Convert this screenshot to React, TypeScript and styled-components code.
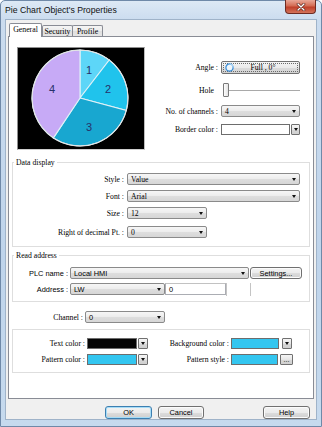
import React from "react";
import styled, { createGlobalStyle } from "styled-components";

const SERIF = `"Liberation Serif", "Times New Roman", serif`;
const SANS = `"Liberation Sans", Arial, sans-serif`;

const GlobalStyle = createGlobalStyle`
  html, body { margin: 0; padding: 0; background: #ffffff; }
  body { width: 322px; height: 427px; overflow: hidden; }
  * { box-sizing: border-box; }
`;

const Window = styled.div`
  width: 322px;
  height: 427px;
  display: flex;
  flex-direction: column;
  padding: 0 4px 6px 4px;
  background: linear-gradient(180deg, #dde9f5 0px, #cbdcef 19px, #bfd4eb 60%, #c6daee 100%);
  border: 1px solid #6f89a8;
  border-radius: 5px 5px 0 0;
`;

const TitleBar = styled.div`
  height: 18px;
  display: flex;
  align-items: flex-start;
  justify-content: space-between;
`;

const Title = styled.span`
  font-family: ${SANS};
  font-size: 8.7px;
  color: #111;
  line-height: 18px;
`;

const CloseButton = styled.div`
  width: 31px;
  height: 14px;
  margin-top: -1px;
  margin-right: 1px;
  display: flex;
  align-items: center;
  justify-content: center;
  border: 1px solid #6e2b22;
  border-top: none;
  border-radius: 0 0 4px 4px;
  background: linear-gradient(180deg, #e9a797 0%, #d46c54 45%, #c0402a 55%, #d3735a 100%);
`;

const Client = styled.div`
  flex: 1;
  display: flex;
  flex-direction: column;
  background: #f0f0f0;
  border: 1px solid #9fb3c9;
  padding: 3px 2px 0 2px;
`;

const TabsRow = styled.div`
  height: 14px;
  display: flex;
  align-items: flex-end;
  padding-left: 1px;
  margin-bottom: -1px;
  position: relative;
  z-index: 1;
`;

const Tab = styled.div<{ $active?: boolean; $w: number; $ml?: number }>`
  width: ${(p) => p.$w}px;
  height: ${(p) => (p.$active ? 14 : 11)}px;
  margin-bottom: ${(p) => (p.$active ? 0 : 1)}px;
  margin-left: ${(p) => p.$ml ?? 0}px;
  display: flex;
  align-items: center;
  justify-content: center;
  border: 1px solid #898c95;
  border-bottom: none;
  border-radius: 2px 2px 0 0;
  background: ${(p) =>
    p.$active ? "#ffffff" : "linear-gradient(180deg, #f5f5f5 0%, #ebebeb 50%, #dedede 51%, #e6e6e6 100%)"};
  font-family: ${SERIF};
  font-size: 7.8px;
  color: #000;
  padding-bottom: ${(p) => (p.$active ? 2 : 0)}px;
`;

const Panel = styled.div`
  height: 363px;
  display: flex;
  flex-direction: column;
  background: #ffffff;
  border: 1px solid #898c95;
`;

const TopSection = styled.div`
  height: 113px;
  display: flex;
`;

const PieBox = styled.div`
  width: 128px;
  height: 103px;
  margin: 10px 0 0 8px;
  background: #000;
  border: 1px solid #8f8f8f;
  border-bottom-color: #cfcfcf;
  border-right-color: #bdbdbd;
  flex-shrink: 0;
`;

const RightCol = styled.div`
  flex: 1;
  display: flex;
  flex-direction: column;
  padding-top: 24px;
`;

const Row = styled.div<{ $mt?: number; $h?: number; $gap?: number }>`
  display: flex;
  align-items: center;
  height: ${(p) => p.$h ?? 12}px;
  margin-top: ${(p) => p.$mt ?? 0}px;
  gap: ${(p) => p.$gap ?? 3}px;
`;

const Label = styled.span<{ $w: number; $pr?: number; $sans?: boolean }>`
  width: ${(p) => p.$w}px;
  flex-shrink: 0;
  text-align: right;
  white-space: nowrap;
  padding-right: ${(p) => p.$pr ?? 0}px;
  font-family: ${(p) => (p.$sans ? SANS : SERIF)};
  font-size: ${(p) => (p.$sans ? 7.4 : 7.7)}px;
  color: #000;
`;

const Combo = styled.div<{ $w: number; $sans?: boolean }>`
  width: ${(p) => p.$w}px;
  height: 12px;
  flex-shrink: 0;
  display: flex;
  align-items: center;
  justify-content: space-between;
  padding: 0 3px 0 3px;
  border: 1px solid #8a8a8a;
  border-radius: 2px;
  background: linear-gradient(180deg, #f6f6f6 0%, #ececec 50%, #dedede 51%, #d6d6d6 100%);
  font-family: ${(p) => (p.$sans ? SANS : SERIF)};
  font-size: ${(p) => (p.$sans ? 7.4 : 7.7)}px;
  color: #000;
`;

const Caret = styled.span`
  width: 0;
  height: 0;
  border-left: 2.5px solid transparent;
  border-right: 2.5px solid transparent;
  border-top: 3px solid #111;
  flex-shrink: 0;
`;

const AngleButton = styled.div`
  width: 79px;
  height: 13px;
  padding: 1px;
  display: flex;
  border: 1px solid #707070;
  border-radius: 2px;
  background: linear-gradient(180deg, #f4f4f4 0%, #ebebeb 50%, #dcdcdc 51%, #d2d2d2 100%);
`;

const FocusRect = styled.div`
  flex: 1;
  display: flex;
  align-items: center;
  border: 1px dotted #6a6a6a;
  font-family: ${SERIF};
  font-size: 7.7px;
  line-height: 7px;
  color: #000;
`;

const AngleText = styled.span`
  flex: 1;
  text-align: center;
  padding-right: 6px;
`;

const SliderBox = styled.div`
  width: 79px;
  height: 14px;
  display: flex;
  align-items: center;
  padding-left: 2px;
`;

const Thumb = styled.div`
  width: 6px;
  height: 14px;
  border: 1px solid #7a7a7a;
  border-radius: 1px;
  background: linear-gradient(90deg, #fdfdfd, #e4e4e4);
  flex-shrink: 0;
`;

const Track = styled.div`
  flex: 1;
  height: 1px;
  background: #a9a9a9;
`;

const Swatch = styled.div<{ $w: number; $color: string; $ml?: number }>`
  width: ${(p) => p.$w}px;
  height: 11px;
  flex-shrink: 0;
  margin-left: ${(p) => p.$ml ?? 0}px;
  border: 1px solid #6d6d6d;
  background: ${(p) => p.$color};
`;

const DropBtn = styled.div<{ $w?: number }>`
  width: ${(p) => p.$w ?? 10}px;
  height: 11px;
  flex-shrink: 0;
  display: flex;
  align-items: center;
  justify-content: center;
  border: 1px solid #707070;
  border-radius: 1px;
  background: linear-gradient(180deg, #f6f6f6 0%, #e6e6e6 50%, #d8d8d8 51%, #d0d0d0 100%);
  font-family: ${SANS};
  font-size: 7px;
  line-height: 7px;
  color: #000;
`;

const PairGap = styled.div<{ $gap: number }>`
  display: flex;
  align-items: center;
  gap: ${(p) => p.$gap}px;
`;

const Group = styled.fieldset<{ $mt: number; $pt: number; $pb: number }>`
  margin: ${(p) => p.$mt}px 3px 0 3px;
  padding: ${(p) => p.$pt}px 0 ${(p) => p.$pb}px 0;
  border: 1px solid #dedede;
  min-width: 0;
`;

const Legend = styled.legend`
  font-family: ${SERIF};
  font-size: 7.7px;
  line-height: 9px;
  padding: 0 2px;
  margin-left: 1px;
  color: #000;
`;

const GroupBody = styled.div`
  display: flex;
  flex-direction: column;
`;

const PushButton = styled.div<{ $w: number; $h?: number; $default?: boolean }>`
  width: ${(p) => p.$w}px;
  height: ${(p) => p.$h ?? 13}px;
  flex-shrink: 0;
  display: flex;
  align-items: center;
  justify-content: center;
  border: 1px solid ${(p) => (p.$default ? "#3c7fb1" : "#707070")};
  border-radius: 3px;
  box-shadow: ${(p) => (p.$default ? "inset 0 0 0 1px #a6dcf7" : "inset 0 0 0 1px #fbfbfb")};
  background: linear-gradient(180deg, #f3f3f3 0%, #ebebeb 50%, #dddddd 51%, #cfcfcf 100%);
  font-family: ${SANS};
  font-size: 7.4px;
  color: #000;
`;

const TextInput = styled.div<{ $w: number }>`
  width: ${(p) => p.$w}px;
  height: 12px;
  flex-shrink: 0;
  display: flex;
  align-items: center;
  padding-left: 3px;
  border: 1px solid #abadb3;
  border-top-color: #c2c2c2;
  background: #fff;
  font-family: ${SANS};
  font-size: 7.4px;
  color: #000;
`;

const Cell = styled.div<{ $w: number }>`
  width: ${(p) => p.$w}px;
  height: 13px;
  flex-shrink: 0;
  border-left: 1px solid #c4c4c4;
`;

const ChannelRow = styled(Row)`
  margin-left: 3px;
`;

const ButtonsRow = styled.div`
  height: 13px;
  margin-top: 7px;
  display: flex;
  align-items: center;
  gap: 6px;
  padding: 0 4px 0 97px;
`;

const Spacer = styled.div`
  flex: 1;
`;

const CYAN = "#33c6f0";

function PieChart() {
  const cx = 62;
  const cy = 50;
  const r = 48;
  const pt = (deg: number) => {
    const a = (deg * Math.PI) / 180;
    return [cx + r * Math.sin(a), cy - r * Math.cos(a)] as const;
  };
  const slices = [
    { from: 0, to: 37.6, color: "#5dd6f8" },
    { from: 37.6, to: 105, color: "#20c3ec" },
    { from: 105, to: 213.7, color: "#18a7d0" },
    { from: 213.7, to: 360, color: "#c7aaf6" },
  ];
  const labels = [
    { t: "1", x: 71, y: 22 },
    { t: "2", x: 90, y: 41 },
    { t: "3", x: 71, y: 79 },
    { t: "4", x: 34, y: 41 },
  ];
  return (
    <svg width="126" height="101" viewBox="0 0 126 101">
      {slices.map((s, i) => {
        const [x1, y1] = pt(s.from);
        const [x2, y2] = pt(s.to);
        const large = s.to - s.from > 180 ? 1 : 0;
        return (
          <path
            key={i}
            d={`M${cx},${cy} L${x1.toFixed(2)},${y1.toFixed(2)} A${r},${r} 0 ${large} 1 ${x2.toFixed(2)},${y2.toFixed(2)} Z`}
            fill={s.color}
            stroke="#dff2f8"
            strokeWidth="1.1"
          />
        );
      })}
      <circle cx={cx} cy={cy} r={r} fill="none" stroke="#e4e4e4" strokeWidth="1" />
      {labels.map((l) => (
        <text
          key={l.t}
          x={l.x}
          y={l.y}
          textAnchor="middle"
          dominantBaseline="central"
          fontFamily={SANS}
          fontSize="11"
          fill="#27306a"
        >
          {l.t}
        </text>
      ))}
    </svg>
  );
}

function CloseIcon() {
  return (
    <svg width="10" height="8" viewBox="0 0 10 8">
      <path d="M2 1 L8 7 M8 1 L2 7" stroke="#5a1d14" strokeWidth="2.6" strokeLinecap="round" />
      <path d="M2 1 L8 7 M8 1 L2 7" stroke="#ffffff" strokeWidth="1.4" strokeLinecap="round" />
    </svg>
  );
}

function AngleIcon() {
  return (
    <svg width="11" height="9" viewBox="0 0 11 9">
      <circle cx="5.5" cy="4.5" r="3.6" fill="#eef6fc" stroke="#3b8ed8" strokeWidth="1.3" />
      <path d="M5.5 0.9 A3.6 3.6 0 0 1 9.1 4.5" stroke="#a9d3f4" strokeWidth="1.3" fill="none" />
    </svg>
  );
}

function ComboBox({ w, value, sans }: { w: number; value: string; sans?: boolean }) {
  return (
    <Combo $w={w} $sans={sans}>
      <span>{value}</span>
      <Caret />
    </Combo>
  );
}

export default function App() {
  return (
    <>
      <GlobalStyle />
      <Window>
        <TitleBar>
          <Title>Pie Chart Object's Properties</Title>
          <CloseButton>
            <CloseIcon />
          </CloseButton>
        </TitleBar>
        <Client>
          <TabsRow>
            <Tab $active $w={33}>General</Tab>
            <Tab $w={31}>Security</Tab>
            <Tab $w={31} $ml={-1}>Profile</Tab>
          </TabsRow>
          <Panel>
            <TopSection>
              <PieBox>
                <PieChart />
              </PieBox>
              <RightCol>
                <Row $h={13}>
                  <Label $w={73}>Angle :</Label>
                  <AngleButton>
                    <FocusRect>
                      <AngleIcon />
                      <AngleText>Full , 0°</AngleText>
                    </FocusRect>
                  </AngleButton>
                </Row>
                <Row $mt={9} $h={14}>
                  <Label $w={73} $pr={4}>Hole</Label>
                  <SliderBox>
                    <Thumb />
                    <Track />
                  </SliderBox>
                </Row>
                <Row $mt={8}>
                  <Label $w={73}>No. of channels :</Label>
                  <ComboBox w={79} value="4" />
                </Row>
                <Row $mt={7} $h={11}>
                  <Label $w={73}>Border color :</Label>
                  <PairGap $gap={1}>
                    <Swatch $w={69} $color="#ffffff" />
                    <DropBtn $w={9}>
                      <Caret />
                    </DropBtn>
                  </PairGap>
                </Row>
              </RightCol>
            </TopSection>

            <Group $mt={8} $pt={6} $pb={8}>
              <Legend>Data display</Legend>
              <GroupBody>
                <Row>
                  <Label $w={111}>Style :</Label>
                  <ComboBox w={173} value="Value" />
                </Row>
                <Row $mt={5}>
                  <Label $w={111}>Font :</Label>
                  <ComboBox w={173} value="Arial" />
                </Row>
                <Row $mt={5}>
                  <Label $w={111}>Size :</Label>
                  <ComboBox w={80} value="12" />
                </Row>
                <Row $mt={7}>
                  <Label $w={111}>Right of decimal Pt. :</Label>
                  <ComboBox w={80} value="0" />
                </Row>
              </GroupBody>
            </Group>

            <Group $mt={4} $pt={7} $pb={6}>
              <Legend>Read address</Legend>
              <GroupBody>
                <Row $gap={2}>
                  <Label $w={55} $sans>PLC name :</Label>
                  <PairGap $gap={1}>
                    <ComboBox w={179} value="Local HMI" sans />
                    <PushButton $w={52} $h={12}>Settings...</PushButton>
                  </PairGap>
                </Row>
                <Row $mt={4} $gap={2}>
                  <Label $w={55} $sans>Address :</Label>
                  <PairGap $gap={0}>
                    <ComboBox w={95} value="LW" sans />
                    <TextInput $w={61}>0</TextInput>
                    <Cell $w={24} />
                    <Cell $w={30} />
                  </PairGap>
                </Row>
              </GroupBody>
            </Group>

            <ChannelRow $mt={9} $gap={2}>
              <Label $w={71}>Channel :</Label>
              <ComboBox w={80} value="0" sans />
            </ChannelRow>

            <Group $mt={6} $pt={8} $pb={7}>
              <GroupBody>
                <Row $h={11} $gap={0}>
                  <Label $w={72}>Text color :</Label>
                  <PairGap $gap={1}>
                    <Swatch $w={50} $color="#050505" $ml={2} />
                    <DropBtn>
                      <Caret />
                    </DropBtn>
                  </PairGap>
                  <Label $w={81}>Background color :</Label>
                  <PairGap $gap={3}>
                    <Swatch $w={48} $color={CYAN} $ml={2} />
                    <DropBtn>
                      <Caret />
                    </DropBtn>
                  </PairGap>
                </Row>
                <Row $mt={5} $h={11} $gap={0}>
                  <Label $w={72}>Pattern color :</Label>
                  <PairGap $gap={1}>
                    <Swatch $w={50} $color={CYAN} $ml={2} />
                    <DropBtn>
                      <Caret />
                    </DropBtn>
                  </PairGap>
                  <Label $w={81}>Pattern style :</Label>
                  <PairGap $gap={2}>
                    <Swatch $w={47} $color={CYAN} $ml={2} />
                    <DropBtn $w={13}>...</DropBtn>
                  </PairGap>
                </Row>
              </GroupBody>
            </Group>
          </Panel>
          <ButtonsRow>
            <PushButton $w={47} $default>OK</PushButton>
            <PushButton $w={46}>Cancel</PushButton>
            <Spacer />
            <PushButton $w={47}>Help</PushButton>
          </ButtonsRow>
        </Client>
      </Window>
    </>
  );
}
